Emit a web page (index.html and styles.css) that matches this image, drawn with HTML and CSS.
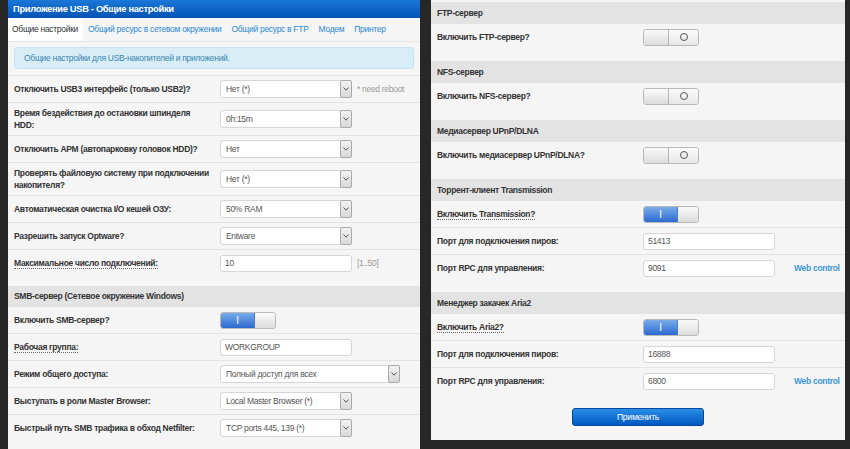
FILE: index.html
```html
<html lang="ru">
<head>
    <meta charset="utf-8">
    <title>Приложение USB - Общие настройки</title>
    <link rel="stylesheet" href="styles.css">
</head>
<body>
<div class="screen">
    <div class="panel panel-left">
        <div class="titlebar">Приложение USB - Общие настройки</div>
        <div class="tabs">
            <span class="tab active">Общие настройки</span>
            <span class="tab">Общий ресурс в сетевом окружении</span>
            <span class="tab">Общий ресурс в FTP</span>
            <span class="tab">Модем</span>
            <span class="tab">Принтер</span>
        </div>
        <div class="info">Общие настройки для USB-накопителей и приложений.</div>

        <div class="section first">
            <div class="row">
                <div class="lbl">Отключить USB3 интерфейс (только USB2)?</div>
                <div class="ctl">
                    <div class="sel"><span class="val">Нет (*)</span><span class="arr"><svg width="6" height="4" viewBox="0 0 6 4"><path d="M.5 .5L3 3.2L5.5 .5" /></svg></span></div>
                    <span class="hint">* need reboot</span>
                </div>
            </div>
            <div class="row">
                <div class="lbl">Время бездействия до остановки шпинделя HDD:</div>
                <div class="ctl">
                    <div class="sel"><span class="val">0h:15m</span><span class="arr"><svg width="6" height="4" viewBox="0 0 6 4"><path d="M.5 .5L3 3.2L5.5 .5" /></svg></span></div>
                </div>
            </div>
            <div class="row">
                <div class="lbl">Отключить APM (автопарковку головок HDD)?</div>
                <div class="ctl">
                    <div class="sel"><span class="val">Нет</span><span class="arr"><svg width="6" height="4" viewBox="0 0 6 4"><path d="M.5 .5L3 3.2L5.5 .5" /></svg></span></div>
                </div>
            </div>
            <div class="row">
                <div class="lbl">Проверять файловую систему при подключении накопителя?</div>
                <div class="ctl">
                    <div class="sel"><span class="val">Нет (*)</span><span class="arr"><svg width="6" height="4" viewBox="0 0 6 4"><path d="M.5 .5L3 3.2L5.5 .5" /></svg></span></div>
                </div>
            </div>
            <div class="row">
                <div class="lbl">Автоматическая очистка I/O кешей ОЗУ:</div>
                <div class="ctl">
                    <div class="sel"><span class="val">50% RAM</span><span class="arr"><svg width="6" height="4" viewBox="0 0 6 4"><path d="M.5 .5L3 3.2L5.5 .5" /></svg></span></div>
                </div>
            </div>
            <div class="row">
                <div class="lbl">Разрешить запуск Optware?</div>
                <div class="ctl">
                    <div class="sel"><span class="val">Entware</span><span class="arr"><svg width="6" height="4" viewBox="0 0 6 4"><path d="M.5 .5L3 3.2L5.5 .5" /></svg></span></div>
                </div>
            </div>
            <div class="row">
                <div class="lbl"><span class="dotted">Максимальное число подключений:</span></div>
                <div class="ctl">
                    <div class="inp">10</div>
                    <span class="hint">[1..50]</span>
                </div>
            </div>
        </div>

        <div class="section">
            <div class="sec-title">SMB-сервер (Сетевое окружение Windows)</div>
            <div class="row">
                <div class="lbl">Включить SMB-сервер?</div>
                <div class="ctl">
                    <div class="toggle on"><span class="t-on">I</span><span class="t-rest"></span></div>
                </div>
            </div>
            <div class="row">
                <div class="lbl"><span class="dotted">Рабочая группа:</span></div>
                <div class="ctl"><div class="inp">WORKGROUP</div></div>
            </div>
            <div class="row">
                <div class="lbl">Режим общего доступа:</div>
                <div class="ctl">
                    <div class="sel wide"><span class="val">Полный доступ для всех</span><span class="arr"><svg width="6" height="4" viewBox="0 0 6 4"><path d="M.5 .5L3 3.2L5.5 .5" /></svg></span></div>
                </div>
            </div>
            <div class="row">
                <div class="lbl">Выступать в роли Master Browser:</div>
                <div class="ctl">
                    <div class="sel"><span class="val">Local Master Browser (*)</span><span class="arr"><svg width="6" height="4" viewBox="0 0 6 4"><path d="M.5 .5L3 3.2L5.5 .5" /></svg></span></div>
                </div>
            </div>
            <div class="row">
                <div class="lbl">Быстрый путь SMB трафика в обход Netfilter:</div>
                <div class="ctl">
                    <div class="sel"><span class="val">TCP ports 445, 139 (*)</span><span class="arr"><svg width="6" height="4" viewBox="0 0 6 4"><path d="M.5 .5L3 3.2L5.5 .5" /></svg></span></div>
                </div>
            </div>
        </div>
    </div>

    <div class="panel panel-right">
        <div class="section">
            <div class="sec-title">FTP-сервер</div>
            <div class="row">
                <div class="lbl">Включить FTP-сервер?</div>
                <div class="ctl"><div class="toggle"><span class="t-blank"></span><span class="t-off"><i></i></span></div></div>
            </div>
        </div>
        <div class="section">
            <div class="sec-title">NFS-сервер</div>
            <div class="row">
                <div class="lbl">Включить NFS-сервер?</div>
                <div class="ctl"><div class="toggle"><span class="t-blank"></span><span class="t-off"><i></i></span></div></div>
            </div>
        </div>
        <div class="section">
            <div class="sec-title">Медиасервер UPnP/DLNA</div>
            <div class="row">
                <div class="lbl">Включить медиасервер UPnP/DLNA?</div>
                <div class="ctl"><div class="toggle"><span class="t-blank"></span><span class="t-off"><i></i></span></div></div>
            </div>
        </div>
        <div class="section">
            <div class="sec-title">Торрент-клиент Transmission</div>
            <div class="row">
                <div class="lbl"><span class="dotted">Включить Transmission?</span></div>
                <div class="ctl"><div class="toggle on"><span class="t-on">I</span><span class="t-rest"></span></div></div>
            </div>
            <div class="row">
                <div class="lbl">Порт для подключения пиров:</div>
                <div class="ctl"><div class="inp">51413</div></div>
            </div>
            <div class="row">
                <div class="lbl">Порт RPC для управления:</div>
                <div class="ctl"><div class="inp">9091</div><a class="link">Web control</a></div>
            </div>
        </div>
        <div class="section">
            <div class="sec-title">Менеджер закачек Aria2</div>
            <div class="row">
                <div class="lbl"><span class="dotted">Включить Aria2?</span></div>
                <div class="ctl"><div class="toggle on"><span class="t-on">I</span><span class="t-rest"></span></div></div>
            </div>
            <div class="row">
                <div class="lbl">Порт для подключения пиров:</div>
                <div class="ctl"><div class="inp">16888</div></div>
            </div>
            <div class="row">
                <div class="lbl">Порт RPC для управления:</div>
                <div class="ctl"><div class="inp">6800</div><a class="link">Web control</a></div>
            </div>
        </div>
        <div class="actions">
            <button class="apply">Применить</button>
        </div>
    </div>
</div>
</body>
</html>
```

FILE: styles.css
```css
body {
    margin: 0;
    background-color: #272727;
    font-family: "Liberation Sans", Arial, sans-serif;
    font-size: 8.5px;
    letter-spacing: -0.3px;
    color: #333;
}
.screen {
    display: flex;
    align-items: flex-start;
    gap: 11px;
    padding-left: 8px;
    height: 449px;
    overflow: hidden;
}
.panel {
    background-color: #f5f5f5;
}
.panel-left {
    width: 412px;
    height: 449px;
}
.panel-right {
    width: 414px;
    padding-top: 2px;
}
.titlebar {
    height: 18px;
    line-height: 18px;
    padding-left: 5px;
    background: linear-gradient(#1b78d8, #0453b6);
    color: #fff;
    font-weight: bold;
    font-size: 9.3px;
}
.tabs {
    display: flex;
    height: 23px;
    border-bottom: 1px solid #e6e6e6;
    white-space: nowrap;
}
.tab {
    padding: 0 5px;
    line-height: 23px;
    color: #2f8ad2;
}
.tab.active {
    background-color: #fff;
    color: #333;
    padding: 0 5px 0 4px;
}
.info {
    margin: 5px 6px 0;
    height: 20px;
    line-height: 20px;
    padding-left: 9px;
    background-color: #d9edf7;
    border: 1px solid #c6e4f3;
    border-radius: 3px;
    color: #3a87ad;
}
.section {
    padding-bottom: 10px;
}
.section.first {
    margin-top: 6px;
    border-top: 1px solid #e3e3e3;
}
.panel-right .section {
    padding-bottom: 11px;
}
.sec-title {
    height: 21px;
    line-height: 21px;
    padding-left: 6px;
    background-color: #e3e3e3;
    font-weight: bold;
}
.panel-right .sec-title {
    height: 22px;
    line-height: 22px;
}
.row {
    display: flex;
    align-items: center;
    min-height: 18px;
    padding: 4px 6px;
    border-bottom: 1px solid #e3e3e3;
}
.row:last-child {
    border-bottom: none;
}
.lbl {
    width: 198px;
    margin-right: 8px;
    flex: none;
    font-weight: bold;
    line-height: 12px;
}
.dotted {
    border-bottom: 1px dotted #666;
}
.ctl {
    display: flex;
    align-items: center;
    white-space: nowrap;
}
.sel {
    display: flex;
    width: 132px;
    height: 18px;
    box-sizing: border-box;
    background-color: #fff;
    border: 1px solid #d6d6d6;
    border-radius: 3px;
    color: #555;
}
.sel.wide {
    width: 180px;
}
.sel .val {
    flex: 1;
    line-height: 16px;
    padding-left: 5px;
}
.sel .arr {
    width: 10px;
    margin: -1px -1px -1px 0;
    display: flex;
    align-items: center;
    justify-content: center;
    background: linear-gradient(#f2f2f2, #d9d9d9);
    border: 1px solid #aaa;
    border-radius: 2px;
}
.sel .arr path {
    fill: none;
    stroke: #555;
    stroke-width: 1;
}
.inp {
    width: 132px;
    height: 17px;
    box-sizing: border-box;
    line-height: 15px;
    padding-left: 4px;
    background-color: #fff;
    border: 1px solid #d6d6d6;
    border-radius: 3px;
    color: #555;
}
.hint {
    margin-left: 5px;
    color: #999;
}
.link {
    margin-left: 19px;
    color: #3a98d8;
    font-weight: bold;
}
.toggle {
    display: flex;
    width: 56px;
    height: 17px;
    box-sizing: border-box;
    border: 1px solid #b9b9b9;
    border-radius: 3px;
    overflow: hidden;
}
.t-on {
    width: 33px;
    background: linear-gradient(#7aabea, #2c6ad0);
    border-right: 1px solid #4d7fc4;
    color: #fff;
    text-align: center;
    line-height: 15px;
    font-size: 10px;
}
.t-rest {
    flex: 1;
    background: linear-gradient(#fafafa, #dcdcdc);
}
.t-blank {
    width: 24px;
    background: linear-gradient(#fafafa, #dcdcdc);
    border-right: 1px solid #b5b5b5;
}
.t-off {
    flex: 1;
    display: flex;
    align-items: center;
    justify-content: center;
    background: linear-gradient(#fbfbfb, #e6e6e6);
}
.t-off i {
    width: 6px;
    height: 6px;
    border: 1px solid #555;
    border-radius: 50%;
}
.actions {
    padding: 3px 0 14px;
    text-align: center;
}
.apply {
    width: 132px;
    height: 18px;
    padding: 0;
    background: linear-gradient(#2a8ee6, #0058c0);
    border: 1px solid #0048a0;
    border-radius: 3px;
    color: #fff;
    font-family: "Liberation Sans", Arial, sans-serif;
    font-size: 8.5px;
    letter-spacing: -0.2px;
}
```
